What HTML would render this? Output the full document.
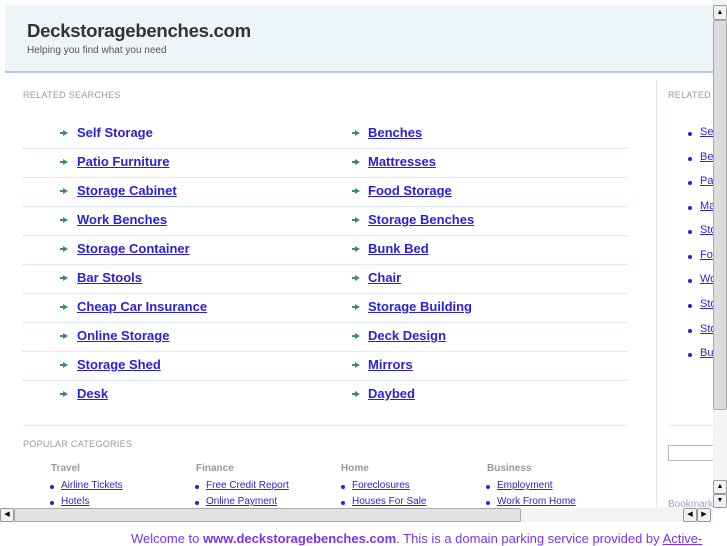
<!DOCTYPE html>
<html><head><style>
*{margin:0;padding:0;box-sizing:border-box}
body{width:727px;height:545px;overflow:hidden;background:#fff;font-family:"Liberation Sans",sans-serif;position:relative}
.a{position:absolute;white-space:nowrap}
#hdr{left:5px;top:5px;width:722px;height:68px;background:#eef5f8;border-bottom:2px solid #b3c8e6}
h1{position:absolute;left:22px;top:15px;font-size:18.6px;font-weight:bold;color:#333;letter-spacing:-0.3px}
.sub{position:absolute;left:22px;top:40px;font-size:10px;color:#555}
.lbl{font-size:9px;color:#999;letter-spacing:0.3px}
.lk{font-size:13px;font-weight:bold;color:#2a1fd8;text-decoration:underline}
.ar{position:absolute;width:8px;height:6px}
.ar:before{content:"";position:absolute;left:0;top:2px;width:4px;height:2px;background:#3a8a7a}
.ar:after{content:"";position:absolute;left:3px;top:0;border-left:5px solid #3a8a7a;border-top:3px solid transparent;border-bottom:3px solid transparent}
.dot{position:absolute;left:23px;width:604px;border-top:1px dotted #c8d8ee}
.ch{font-size:10px;font-weight:bold;color:#999}
.sl{font-size:10px;color:#3322cc;text-decoration:underline}
.sr{font-size:11px;color:#3322cc;text-decoration:underline}
.b{width:4px;height:4px;border-radius:2px;background:#2a1fd8}
.sb{background:#e8e8e8;border:1px solid #aaa}
.btn{background:#f2f2f2;border:1px solid #999;border-radius:2px}
</style></head><body>
<div class="a" id="hdr"><h1>Deckstoragebenches.com</h1><div class="sub">Helping you find what you need</div></div>
<div class="a lbl" style="left:23px;top:90px">RELATED SEARCHES</div>
<div class="a" style="left:656px;top:80px;width:1px;height:428px;background:#dde6f2"></div>
<div class="a lbl" style="left:668px;top:90px">RELATED</div>

<div class="ar" style="left:60px;top:130px"></div>
<div class="a lk" style="left:77px;top:125px;text-decoration:none">Self Storage</div>
<div class="ar" style="left:352px;top:130px"></div>
<div class="a lk" style="left:368px;top:125px">Benches</div>
<div class="dot" style="top:148px"></div>

<div class="ar" style="left:60px;top:159px"></div>
<div class="a lk" style="left:77px;top:154px">Patio Furniture</div>
<div class="ar" style="left:352px;top:159px"></div>
<div class="a lk" style="left:368px;top:154px">Mattresses</div>
<div class="dot" style="top:177px"></div>

<div class="ar" style="left:60px;top:188px"></div>
<div class="a lk" style="left:77px;top:183px">Storage Cabinet</div>
<div class="ar" style="left:352px;top:188px"></div>
<div class="a lk" style="left:368px;top:183px">Food Storage</div>
<div class="dot" style="top:206px"></div>

<div class="ar" style="left:60px;top:217px"></div>
<div class="a lk" style="left:77px;top:212px">Work Benches</div>
<div class="ar" style="left:352px;top:217px"></div>
<div class="a lk" style="left:368px;top:212px">Storage Benches</div>
<div class="dot" style="top:235px"></div>

<div class="ar" style="left:60px;top:246px"></div>
<div class="a lk" style="left:77px;top:241px">Storage Container</div>
<div class="ar" style="left:352px;top:246px"></div>
<div class="a lk" style="left:368px;top:241px">Bunk Bed</div>
<div class="dot" style="top:264px"></div>

<div class="ar" style="left:60px;top:275px"></div>
<div class="a lk" style="left:77px;top:270px">Bar Stools</div>
<div class="ar" style="left:352px;top:275px"></div>
<div class="a lk" style="left:368px;top:270px">Chair</div>
<div class="dot" style="top:293px"></div>

<div class="ar" style="left:60px;top:304px"></div>
<div class="a lk" style="left:77px;top:299px">Cheap Car Insurance</div>
<div class="ar" style="left:352px;top:304px"></div>
<div class="a lk" style="left:368px;top:299px">Storage Building</div>
<div class="dot" style="top:322px"></div>

<div class="ar" style="left:60px;top:333px"></div>
<div class="a lk" style="left:77px;top:328px">Online Storage</div>
<div class="ar" style="left:352px;top:333px"></div>
<div class="a lk" style="left:368px;top:328px">Deck Design</div>
<div class="dot" style="top:351px"></div>

<div class="ar" style="left:60px;top:362px"></div>
<div class="a lk" style="left:77px;top:357px">Storage Shed</div>
<div class="ar" style="left:352px;top:362px"></div>
<div class="a lk" style="left:368px;top:357px">Mirrors</div>
<div class="dot" style="top:380px"></div>

<div class="ar" style="left:60px;top:391px"></div>
<div class="a lk" style="left:77px;top:386px">Desk</div>
<div class="ar" style="left:352px;top:391px"></div>
<div class="a lk" style="left:368px;top:386px">Daybed</div>

<div class="a" style="left:23px;top:425px;width:604px;height:1px;background:#e2eaf4"></div>
<div class="a" style="left:668px;top:425px;width:45px;height:1px;background:#e2eaf4"></div>
<div class="a lbl" style="left:23px;top:439px">POPULAR CATEGORIES</div>

<div class="a ch" style="left:51px;top:463px">Travel</div>
<div class="a ch" style="left:196px;top:463px">Finance</div>
<div class="a ch" style="left:341px;top:463px">Home</div>
<div class="a ch" style="left:487px;top:463px">Business</div>

<div class="a b" style="left:50px;top:485px"></div><div class="a sl" style="left:61px;top:480px">Airline Tickets</div>
<div class="a b" style="left:195px;top:485px"></div><div class="a sl" style="left:206px;top:480px">Free Credit Report</div>
<div class="a b" style="left:341px;top:485px"></div><div class="a sl" style="left:352px;top:480px">Foreclosures</div>
<div class="a b" style="left:486px;top:485px"></div><div class="a sl" style="left:497px;top:480px">Employment</div>
<div class="a b" style="left:50px;top:501px"></div><div class="a sl" style="left:61px;top:496px">Hotels</div>
<div class="a b" style="left:195px;top:501px"></div><div class="a sl" style="left:206px;top:496px">Online Payment</div>
<div class="a b" style="left:341px;top:501px"></div><div class="a sl" style="left:352px;top:496px">Houses For Sale</div>
<div class="a b" style="left:486px;top:501px"></div><div class="a sl" style="left:497px;top:496px">Work From Home</div>

<!-- right column -->
<div class="a b" style="left:688px;top:132px"></div><div class="a sr" style="left:700px;top:126px">Se</div>
<div class="a b" style="left:688px;top:157px"></div><div class="a sr" style="left:700px;top:151px">Be</div>
<div class="a b" style="left:688px;top:181px"></div><div class="a sr" style="left:700px;top:175px">Pa</div>
<div class="a b" style="left:688px;top:206px"></div><div class="a sr" style="left:700px;top:200px">Ma</div>
<div class="a b" style="left:688px;top:230px"></div><div class="a sr" style="left:700px;top:224px">Sto</div>
<div class="a b" style="left:688px;top:255px"></div><div class="a sr" style="left:700px;top:249px">Fo</div>
<div class="a b" style="left:688px;top:279px"></div><div class="a sr" style="left:700px;top:273px">Wo</div>
<div class="a b" style="left:688px;top:304px"></div><div class="a sr" style="left:700px;top:298px">Sto</div>
<div class="a b" style="left:688px;top:329px"></div><div class="a sr" style="left:700px;top:323px">Sto</div>
<div class="a b" style="left:688px;top:353px"></div><div class="a sr" style="left:700px;top:347px">Bu</div>
<div class="a" style="left:668px;top:445px;width:46px;height:16px;border:1px solid #bbb;border-right:none"></div>
<div class="a" style="left:668px;top:499px;font-size:10px;color:#99a0cc">Bookmark</div>

<!-- vertical scrollbar -->
<div class="a" style="left:713px;top:0;width:14px;height:508px;background:#f4f4f4"></div>
<div class="a btn" style="left:713px;top:5px;width:14px;height:15px;font-size:7px;text-align:center;line-height:13px">▲</div>
<div class="a sb" style="left:713px;top:20px;width:14px;height:390px;border-radius:2px;background:#dcdcdc"></div>
<div class="a btn" style="left:713px;top:480px;width:14px;height:14px;font-size:7px;text-align:center;line-height:12px">▲</div>
<div class="a btn" style="left:713px;top:494px;width:14px;height:14px;font-size:7px;text-align:center;line-height:12px">▼</div>

<!-- horizontal scrollbar -->
<div class="a" style="left:0;top:508px;width:713px;height:14px;background:#f4f4f4"></div>
<div class="a btn" style="left:0;top:508px;width:14px;height:14px;font-size:7px;text-align:center;line-height:12px">◀</div>
<div class="a sb" style="left:14px;top:508px;width:507px;height:14px;border-radius:2px;background:#e2e2e2"></div>
<div class="a btn" style="left:683px;top:508px;width:14px;height:14px;font-size:7px;text-align:center;line-height:12px">◀</div>
<div class="a btn" style="left:697px;top:508px;width:14px;height:14px;font-size:7px;text-align:center;line-height:12px">▶</div>

<div class="a" style="left:131px;top:531px;font-size:13px;color:#7a33f0">Welcome to <b>www.deckstoragebenches.com</b>. This is a domain parking service provided by <u>Active-</u></div>
</body></html>
